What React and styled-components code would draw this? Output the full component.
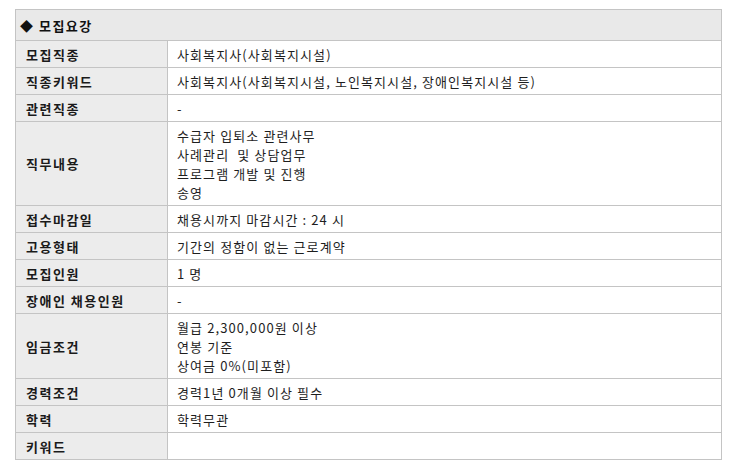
import styled, { createGlobalStyle } from "styled-components";

const GlobalStyle = createGlobalStyle`
  body {
    margin: 0;
    background: #ffffff;
    font-family: "Noto Sans CJK KR", "Noto Sans", sans-serif;
  }
`;

const rows = [
  { label: "모집직종", lines: ["사회복지사(사회복지시설)"] },
  {
    label: "직종키워드",
    lines: ["사회복지사(사회복지시설, 노인복지시설, 장애인복지시설 등)"],
  },
  { label: "관련직종", lines: ["-"] },
  {
    label: "직무내용",
    lines: [
      "수급자 입퇴소 관련사무",
      "사례관리  및 상담업무",
      "프로그램 개발 및 진행",
      "송영",
    ],
  },
  { label: "접수마감일", lines: ["채용시까지 마감시간 : 24 시"] },
  { label: "고용형태", lines: ["기간의 정함이 없는 근로계약"] },
  { label: "모집인원", lines: ["1 명"] },
  { label: "장애인 채용인원", lines: ["-"] },
  {
    label: "임금조건",
    lines: ["월급 2,300,000원 이상", "연봉 기준", "상여금 0%(미포함)"],
  },
  { label: "경력조건", lines: ["경력1년 0개월 이상 필수"] },
  { label: "학력", lines: ["학력무관"] },
  { label: "키워드", lines: [] },
];

export default function App() {
  return (
    <>
      <GlobalStyle />
      <Page>
        <Tabela>
          <Cabecalho>◆ 모집요강</Cabecalho>
          {rows.map((r) => (
            <Linha key={r.label}>
              <Rotulo>{r.label}</Rotulo>
              <Valor>
                {r.lines.map((l, i) => (
                  <p key={i}>{l}</p>
                ))}
              </Valor>
            </Linha>
          ))}
        </Tabela>
      </Page>
    </>
  );
}

const Page = styled.div`
  padding: 9px 0 0 15px;
`;

const Tabela = styled.div`
  width: 706px;
  border-left: 1px solid #c4c4c4;
  border-top: 1px solid #c4c4c4;
  display: flex;
  flex-direction: column;
`;

const Cabecalho = styled.div`
  height: 30px;
  display: flex;
  align-items: center;
  padding-left: 4px;
  background: #e9e9e9;
  border-right: 1px solid #c4c4c4;
  border-bottom: 1px solid #c4c4c4;
  font-size: 13px;
  font-weight: 700;
  letter-spacing: 1.5px;
  color: #111;
`;

const Linha = styled.div`
  display: grid;
  grid-template-columns: 152px 1fr;
  min-height: 26px;
`;

const Rotulo = styled.div`
  display: flex;
  align-items: center;
  padding-left: 10px;
  background: #ececec;
  border-right: 1px solid #c4c4c4;
  border-bottom: 1px solid #c4c4c4;
  font-size: 13px;
  font-weight: 700;
  letter-spacing: 1.5px;
  color: #1a1a1a;
`;

const Valor = styled.div`
  padding: 4px 9px 3px 9px;
  min-height: 19px;
  border-right: 1px solid #c4c4c4;
  border-bottom: 1px solid #c4c4c4;
  font-size: 13px;
  letter-spacing: 1.1px;
  color: #1e1e1e;

  p {
    margin: 0;
    line-height: 19px;
    white-space: pre;
  }
`;
